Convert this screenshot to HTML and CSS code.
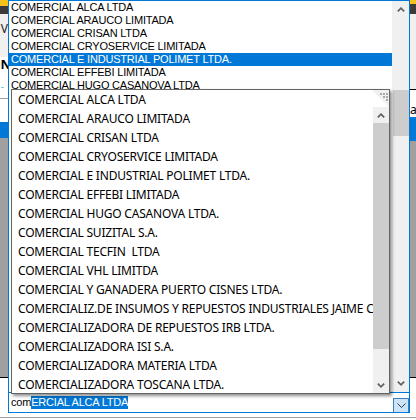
FILE: index.html
```html
<!DOCTYPE html>
<html lang="es">
<head>
    <meta charset="UTF-8">
    <meta name="viewport" content="width=device-width, initial-scale=1.0">
    <title>Clientes</title>
    <link rel="stylesheet" href="styles.css">
</head>
<body>
    <div class="screen">
        <div class="side side-left">
            <div class="s-title"></div>
            <div class="s-bar"></div>
            <div class="s-label"><span>V</span></div>
            <div class="s-head"><span>ON</span><i class="s-mark"></i></div>
            <div class="s-row"></div>
            <div class="s-sel"></div>
            <div class="s-grid"></div>
            <div class="s-foot"></div>
        </div>

        <div class="combo">
            <div class="droplist">
                <ul class="items">
                    <li>COMERCIAL ALCA LTDA</li>
                    <li>COMERCIAL ARAUCO LIMITADA</li>
                    <li>COMERCIAL CRISAN LTDA</li>
                    <li>COMERCIAL CRYOSERVICE LIMITADA</li>
                    <li class="selected">COMERCIAL E INDUSTRIAL POLIMET LTDA.</li>
                    <li>COMERCIAL EFFEBI LIMITADA</li>
                    <li>COMERCIAL HUGO CASANOVA LTDA</li>
                    <li>COMERCIAL SUIZITAL S.A.</li>
                    <li>COMERCIAL TECFIN  LTDA</li>
                    <li>COMERCIAL VHL LIMITDA</li>
                </ul>
                <div class="vscroll">
                    <div class="arrow">
                        <svg width="8" height="5" viewBox="0 0 8 5"><polyline points="0.8,4.4 4,1.2 7.2,4.4" /></svg>
                    </div>
                    <div class="track"><div class="thumb thumb-top"></div></div>
                    <div class="arrow">
                        <svg width="8" height="5" viewBox="0 0 8 5"><polyline points="0.8,0.6 4,3.8 7.2,0.6" /></svg>
                    </div>
                </div>
            </div>
            <div class="edit">
                <span class="typed">com</span><span class="completion">ERCIAL ALCA LTDA</span>
                <div class="drop-btn">
                    <svg width="9" height="5" viewBox="0 0 9 5"><polyline points="0.5,0.5 4.5,4.5 8.5,0.5" /></svg>
                </div>
            </div>
        </div>

        <div class="side side-right">
            <div class="s-title s-title-r"></div>
            <div class="s-bar s-bar-r"></div>
            <div class="s-label-r"></div>
            <div class="s-row-r"><span>a</span></div>
            <div class="s-sel s-sel-r"></div>
            <div class="s-grid s-grid-r"></div>
            <div class="s-foot"></div>
        </div>
    </div>
    <div class="footer"></div>

    <div class="popup">
        <ul class="suggestions">
            <li>COMERCIAL ALCA LTDA</li>
            <li>COMERCIAL ARAUCO LIMITADA</li>
            <li>COMERCIAL CRISAN LTDA</li>
            <li>COMERCIAL CRYOSERVICE LIMITADA</li>
            <li>COMERCIAL E INDUSTRIAL POLIMET LTDA.</li>
            <li>COMERCIAL EFFEBI LIMITADA</li>
            <li>COMERCIAL HUGO CASANOVA LTDA.</li>
            <li>COMERCIAL SUIZITAL S.A.</li>
            <li>COMERCIAL TECFIN  LTDA</li>
            <li>COMERCIAL VHL LIMITDA</li>
            <li>COMERCIAL Y GANADERA PUERTO CISNES LTDA.</li>
            <li>COMERCIALIZ.DE INSUMOS Y REPUESTOS INDUSTRIALES JAIME CORREA</li>
            <li>COMERCIALIZADORA DE REPUESTOS IRB LTDA.</li>
            <li>COMERCIALIZADORA ISI S.A.</li>
            <li>COMERCIALIZADORA MATERIA LTDA</li>
            <li>COMERCIALIZADORA TOSCANA LTDA.</li>
        </ul>
        <div class="pscroll">
            <div class="grip">
                <svg width="17" height="17" viewBox="0 0 17 17">
                    <polygon points="0,0 17,0 17,17" fill="#f0f0f0" />
                    <rect x="8" y="3" width="2" height="2" />
                    <rect x="11" y="3" width="2" height="2" />
                    <rect x="14" y="3" width="2" height="2" />
                    <rect x="11" y="6" width="2" height="2" />
                    <rect x="14" y="6" width="2" height="2" />
                    <rect x="14" y="9" width="2" height="2" />
                </svg>
            </div>
            <div class="arrow">
                <svg width="8" height="5" viewBox="0 0 8 5"><polyline points="0.8,4.4 4,1.2 7.2,4.4" /></svg>
            </div>
            <div class="track"><div class="thumb thumb-pop"></div></div>
            <div class="arrow">
                <svg width="8" height="5" viewBox="0 0 8 5"><polyline points="0.8,0.6 4,3.8 7.2,0.6" /></svg>
            </div>
        </div>
    </div>
</body>
</html>
```

FILE: styles.css
```css
body {
    margin: 0;
    padding: 0;
    width: 416px;
    height: 420px;
    overflow: hidden;
    position: relative;
    background: #fff;
    font-family: "Liberation Sans", Arial, sans-serif;
}
ul {
    list-style: none;
    margin: 0;
    padding: 0;
}
.screen {
    display: flex;
    height: 413px;
}

/* window behind the combo */
.side {
    display: flex;
    flex-direction: column;
    width: 8px;
    overflow: hidden;
}
.side-right {
    width: 6px;
}
.s-title {
    height: 6px;
    background: #f5c21b;
}
.s-bar {
    height: 8px;
    background: #3b3b3b;
}
.s-title-r {
    height: 4px;
}
.s-bar-r {
    height: 10px;
}
.s-label {
    height: 43px;
    background: #f0f0f0;
    display: flex;
    justify-content: flex-end;
    font-family: "Noto Sans", sans-serif;
    font-size: 12px;
    line-height: 12px;
}
.s-label span {
    margin-top: 9px;
    color: #222;
}
.s-head {
    height: 41px;
    background: #fff;
    border-bottom: 1px solid #a0a0a0;
    display: flex;
    justify-content: flex-end;
    position: relative;
    font-family: "Noto Sans", sans-serif;
    font-weight: bold;
    font-size: 13px;
    line-height: 13px;
}
.s-head span {
    margin-top: 1px;
    margin-right: -3px;
}
.s-mark {
    position: absolute;
    left: 1px;
    top: 30px;
    width: 3px;
    height: 1px;
    background: #7fd0e0;
}
.s-row {
    height: 23px;
    background: #fff;
}
.s-sel {
    height: 16px;
    background: #0078d7;
}
.s-grid {
    height: 239px;
    background: #a0a0a0;
    border-bottom: 1px solid #000;
}
.s-foot {
    height: 35px;
    background: #fff;
}
.s-label-r {
    height: 75px;
    background: #f0f0f0;
    border-bottom: 1px solid #000;
}
.s-row-r {
    height: 27px;
    background: #fff;
    font-family: "Noto Sans", sans-serif;
    font-size: 12px;
    line-height: 12px;
}
.s-row-r span {
    display: block;
    margin-top: 14px;
}
.s-sel-r {
    height: 24px;
}
.s-grid-r {
    height: 236px;
}

/* combo box with its list dropped upwards */
.combo {
    width: 402px;
    height: 413px;
    box-sizing: border-box;
    border: 1px solid #0078d7;
    background: #fff;
    display: flex;
    flex-direction: column;
}
.droplist {
    height: 391px;
    border-bottom: 1px solid #0078d7;
    display: flex;
}
.items {
    flex: 1;
    overflow: hidden;
    font-size: 11px;
    letter-spacing: -0.2px;
}
.items li {
    height: 13px;
    line-height: 13px;
    padding-left: 2px;
    white-space: pre;
    color: #000;
}
.items li.selected {
    background: #0078d7;
    color: #fff;
}
.vscroll, .pscroll {
    width: 17px;
    display: flex;
    flex-direction: column;
    background: #f0f0f0;
}
.pscroll {
    width: 16px;
    background: #fff;
}
.arrow {
    height: 17px;
    display: flex;
    align-items: center;
    justify-content: center;
    background: #f0f0f0;
}
.pscroll .arrow {
    height: 16px;
}
.arrow polyline {
    fill: none;
    stroke: #606060;
    stroke-width: 1.7;
}
.track {
    flex: 1;
    background: #f0f0f0;
}
.thumb {
    background: #cdcdcd;
}
.thumb-top {
    margin: 72px 0 0 1px;
    height: 46px;
}
.thumb-pop {
    height: 226px;
}
.grip {
    height: 17px;
    overflow: hidden;
}
.grip svg {
    display: block;
    margin-left: -1px;
    fill: #a8a8a8;
}

.edit {
    height: 19px;
    display: flex;
    align-items: center;
    padding-left: 2px;
    font-size: 11px;
    letter-spacing: -0.2px;
}
.typed {
    line-height: 13px;
    color: #000;
}
.completion {
    line-height: 13px;
    background: #0078d7;
    color: #fff;
}
.drop-btn {
    margin-left: auto;
    align-self: flex-end;
    width: 16px;
    height: 14px;
    box-sizing: border-box;
    border: 1px solid #3d7fb8;
    border-bottom: none;
    background: #cce4f7;
    display: flex;
    align-items: center;
    justify-content: center;
}
.drop-btn polyline {
    fill: none;
    stroke: #3a3a3a;
    stroke-width: 1;
}

.footer {
    height: 4px;
    border-bottom: 1px solid #a0a0a0;
}

/* autocomplete popup over the dropped list */
.popup {
    position: absolute;
    left: 11px;
    top: 89px;
    width: 379px;
    height: 305px;
    box-sizing: border-box;
    border: 1px solid #646464;
    background: #fff;
    box-shadow: 2px 2px 3px rgba(0, 0, 0, 0.45);
    display: flex;
}
.suggestions {
    flex: 1;
    overflow: hidden;
    font-family: "Noto Sans", sans-serif;
    font-size: 12px;
    letter-spacing: -0.2px;
}
.suggestions li {
    height: 19px;
    line-height: 19px;
    padding-left: 6px;
    white-space: pre;
    color: #000;
}
```
